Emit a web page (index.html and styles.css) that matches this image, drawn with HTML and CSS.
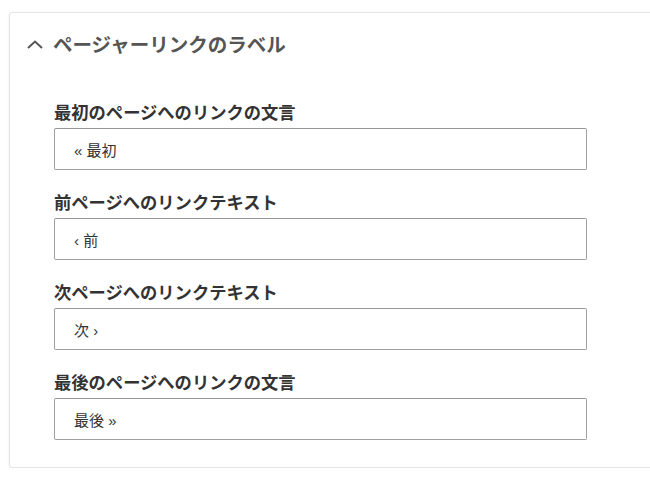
FILE: index.html
```html
<!DOCTYPE html>
<html lang="ja">
<head>
<meta charset="utf-8">
<link rel="stylesheet" href="styles.css">
</head>
<body>
<section class="panel">
  <div class="panel-header">
    <svg class="chevron" width="16" height="9" viewBox="0 0 16 9"><polyline points="1,8 8,1.5 15,8" fill="none" stroke="#555" stroke-width="2"/></svg>
    <h2 class="panel-title">ページャーリンクのラベル</h2>
  </div>
  <div class="panel-body">
    <div class="form-row">
      <label class="form-label">最初のページへのリンクの文言</label>
      <div class="field">« 最初</div>
    </div>
    <div class="form-row">
      <label class="form-label">前ページへのリンクテキスト</label>
      <div class="field">‹ 前</div>
    </div>
    <div class="form-row">
      <label class="form-label">次ページへのリンクテキスト</label>
      <div class="field">次 ›</div>
    </div>
    <div class="form-row">
      <label class="form-label">最後のページへのリンクの文言</label>
      <div class="field">最後 »</div>
    </div>
  </div>
</section>
</body>
</html>
```
FILE: styles.css
```css
html, body {
  margin: 0;
  padding: 0;
  background: #fff;
  overflow: hidden;
}
body {
  font-family: "Noto Sans CJK JP", "Noto Sans", sans-serif;
  color: #333;
}
.panel {
  margin: 12px 0 0 9px;
  width: 680px;
  border: 1px solid #e4e4e4;
  border-radius: 3px;
  box-shadow: 0 1px 3px rgba(0, 0, 0, 0.08);
  background: #fff;
}
.panel-header {
  height: 61px;
  display: flex;
  align-items: center;
  padding-left: 17px;
  gap: 10px;
}
.chevron {
  display: block;
  margin-top: 2px;
}
.panel-title {
  margin: 0;
  font-size: 19.5px;
  font-weight: 700;
  color: #555;
  line-height: 24px;
}
.panel-body {
  padding: 26px 0 27px 44px;
  display: flex;
  flex-direction: column;
  gap: 20px;
}
.form-row {
  display: flex;
  flex-direction: column;
  gap: 4px;
}
.form-label {
  font-size: 17.3px;
  font-weight: 700;
  line-height: 24px;
  color: #333;
}
.field {
  box-sizing: border-box;
  width: 533px;
  height: 42px;
  border: 1px solid #a0a0a0;
  border-top-color: #969696;
  border-radius: 2px;
  padding: 0 19px;
  display: flex;
  align-items: center;
  font-family: "Liberation Sans", "Noto Sans CJK JP", sans-serif;
  font-size: 15px;
  color: #333;
}
```
